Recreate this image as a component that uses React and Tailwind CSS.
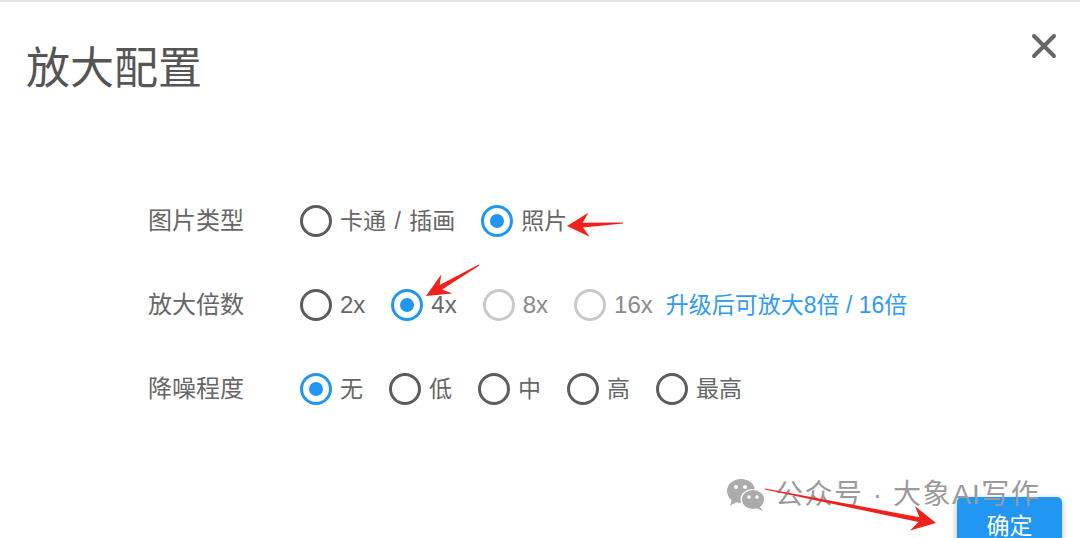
import React from "react";

const FONT = { fontFamily: '"Liberation Sans", "Noto Sans CJK SC", sans-serif' };

function Radio({ checked, disabled, label, textClass }) {
  return (
    <label className="flex items-center gap-[8px]">
      <span
        className={
          checked
            ? "w-[32px] h-[32px] rounded-full border-[3px] border-[#2196f3] flex items-center justify-center"
            : disabled
            ? "w-[32px] h-[32px] rounded-full border-[3px] border-[#c9c9c9] flex items-center justify-center"
            : "w-[32px] h-[32px] rounded-full border-[3px] border-[#5c5c5c] flex items-center justify-center"
        }
      >
        {checked && <span className="w-[14px] h-[14px] rounded-full bg-[#2196f3]" />}
      </span>
      <span className={textClass || "text-[23px] leading-[30px] text-[#666666]"}>{label}</span>
    </label>
  );
}

function arrowPoints(tx, ty, px, py, hl, hw, w0, w1) {
  const L = Math.hypot(px - tx, py - ty);
  const dx = (px - tx) / L;
  const dy = (py - ty) / L;
  const nx = -dy;
  const ny = dx;
  const bx = px - dx * hl;
  const by = py - dy * hl;
  const mx = px - dx * hl * 0.72;
  const my = py - dy * hl * 0.72;
  const pts = [
    [px, py],
    [bx + (nx * hw) / 2, by + (ny * hw) / 2],
    [mx + (nx * w1) / 2, my + (ny * w1) / 2],
    [tx + (nx * w0) / 2, ty + (ny * w0) / 2],
    [tx - (nx * w0) / 2, ty - (ny * w0) / 2],
    [mx - (nx * w1) / 2, my - (ny * w1) / 2],
    [bx - (nx * hw) / 2, by - (ny * hw) / 2],
  ];
  return pts.map((p) => p.map((v) => v.toFixed(1)).join(",")).join(" ");
}

function Row({ label, children }) {
  return (
    <div className="flex items-center h-[40px]">
      <div className="w-[152px] text-[24px] leading-[30px] text-[#666666]">{label}</div>
      <div className="flex items-center gap-[26px]">{children}</div>
    </div>
  );
}

function WeChat() {
  return (
    <svg width="42" height="34" viewBox="0 0 42 34">
      <ellipse cx="15" cy="13" rx="14" ry="12" fill="#ababab" />
      <path d="M6 21 L4 28 L12 23 Z" fill="#ababab" />
      <ellipse cx="27" cy="21.5" rx="12.5" ry="10.5" fill="#ffffff" />
      <ellipse cx="27" cy="21.5" rx="11" ry="9.5" fill="#ababab" />
      <path d="M33 28 L37 33 L30 30 Z" fill="#ababab" />
      <circle cx="10" cy="9" r="2" fill="#ffffff" />
      <circle cx="19" cy="9" r="2" fill="#ffffff" />
      <circle cx="23" cy="19" r="1.8" fill="#ffffff" />
      <circle cx="31" cy="19" r="1.8" fill="#ffffff" />
    </svg>
  );
}

const NUM = "text-[24px] leading-[30px] text-[#666666]";
const NUM_DIS = "text-[24px] leading-[30px] text-[#8a8a8a]";

export default function App() {
  return (
    <div
      className="relative w-[1080px] h-[538px] overflow-hidden bg-white border-t-2 border-[#e2e2e2]"
      style={FONT}
    >
      <div className="flex justify-between items-start pl-[26px] pr-[22px] pt-[30px]">
        <h1 className="mt-[14px] text-[44px] leading-[46px] font-normal text-[#555555]">放大配置</h1>
        <svg width="28" height="28" viewBox="0 0 28 28">
          <path d="M4 4 L24 24 M24 4 L4 24" stroke="#666666" strokeWidth="4" strokeLinecap="round" />
        </svg>
      </div>

      <div className="flex flex-col gap-[44px] pl-[148px] mt-[109px]">
        <Row label="图片类型">
          <Radio label="卡通 / 插画" textClass="text-[23px] leading-[30px] text-[#666666] [word-spacing:2px]" />
          <Radio label="照片" checked />
        </Row>
        <Row label="放大倍数">
          <Radio label="2x" textClass={NUM} />
          <Radio label="4x" checked textClass={NUM} />
          <Radio label="8x" disabled textClass={NUM_DIS} />
          <div className="flex items-center gap-[13px]">
            <Radio label="16x" disabled textClass={NUM_DIS} />
            <span className="text-[23px] leading-[30px] text-[#2f9bf0]">升级后可放大8倍 / 16倍</span>
          </div>
        </Row>
        <Row label="降噪程度">
          <Radio label="无" checked />
          <Radio label="低" />
          <Radio label="中" />
          <Radio label="高" />
          <Radio label="最高" />
        </Row>
      </div>

      <div className="flex justify-end pr-[18px] mt-[88px]">
        <button className="w-[105px] h-[64px] rounded-[5px] bg-[#2196f3] text-white text-[23px] leading-[24px] flex justify-center pt-[17px] shadow-[0_2px_6px_rgba(0,0,0,0.3)]">
          确定
        </button>
      </div>

      <div className="absolute left-[726px] top-[476px] flex items-center gap-[7px] pointer-events-none">
        <WeChat />
        <span className="text-[28px] leading-[34px] tracking-[1.5px] text-[#9a9a9a]">公众号 · 大象AI写作</span>
      </div>

      <svg className="absolute left-0 top-0 pointer-events-none" width="1080" height="538">
        <polygon points={arrowPoints(623, 221, 567, 224, 22, 24, 1, 5)} fill="#f2201a" />
        <polygon points={arrowPoints(479, 263, 426, 294, 24, 22, 1, 5)} fill="#f2201a" />
        <polygon points={arrowPoints(765, 487, 936, 521, 24, 25, 1, 5)} fill="#f2201a" />
      </svg>
    </div>
  );
}
